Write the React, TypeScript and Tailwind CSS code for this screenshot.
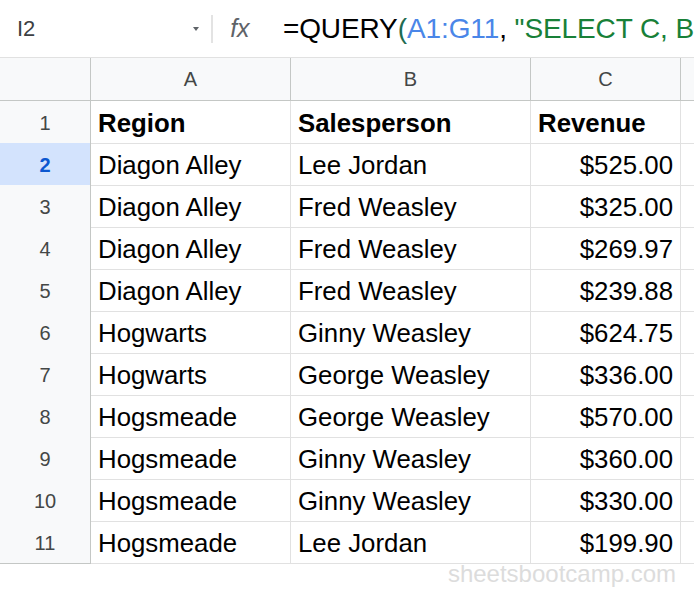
const rows: [string, string, string][] = [
  ['Diagon Alley', 'Lee Jordan', '$525.00'],
  ['Diagon Alley', 'Fred Weasley', '$325.00'],
  ['Diagon Alley', 'Fred Weasley', '$269.97'],
  ['Diagon Alley', 'Fred Weasley', '$239.88'],
  ['Hogwarts', 'Ginny Weasley', '$624.75'],
  ['Hogwarts', 'George Weasley', '$336.00'],
  ['Hogsmeade', 'George Weasley', '$570.00'],
  ['Hogsmeade', 'Ginny Weasley', '$360.00'],
  ['Hogsmeade', 'Ginny Weasley', '$330.00'],
  ['Hogsmeade', 'Lee Jordan', '$199.90'],
];

const gridCols = 'grid grid-cols-[91px_200px_240px_150px_1fr]';

function FormulaBar() {
  return (
    <div className="flex h-[58px] items-center border-b border-[#e1e1e1] bg-white">
      <div className="flex w-[212px] items-center pl-[17px] pr-[12px]">
        <span className="text-[22px] text-[#3c4043]">I2</span>
        <span className="ml-auto mt-[1px] h-0 w-0 border-x-[3.5px] border-t-[4px] border-x-transparent border-t-[#5f6368]" />
      </div>
      <div className="h-[28px] w-[2px] bg-[#e3e3e3]" />
      <span className="ml-[17px] w-[53px] text-[25px] italic text-[#5f6368]">fx</span>
      <div className="whitespace-nowrap text-[28px] tracking-[-0.1px] text-black">
        =QUERY<span className="text-[#1e6b52]">(</span>
        <span className="text-[#4a86e8]">A1:G11</span>, <span className="text-[#188038]">"SELECT C, B</span>
      </div>
    </div>
  );
}

function ColumnHeaders() {
  return (
    <div className={`${gridCols} h-[43px] bg-[#f8f9fa] text-[20px] text-[#444746]`}>
      <div className="border-b border-r border-[#c4c7c5]" />
      {['A', 'B', 'C'].map((c) => (
        <div
          key={c}
          className="flex items-center justify-center border-b border-r border-[#c4c7c5]"
        >
          {c}
        </div>
      ))}
      <div className="border-b border-[#c4c7c5]" />
    </div>
  );
}

function Row({
  num,
  cells,
  bold,
  active,
}: {
  num: number;
  cells: [string, string, string];
  bold?: boolean;
  active?: boolean;
}) {
  return (
    <div className={`${gridCols} h-[42px] text-[25.8px] text-black`}>
      <div
        className={
          active
            ? 'flex items-center justify-center border-b border-r border-[#c4c7c5] bg-[#d3e3fd] pt-[2px] text-[20px] font-bold text-[#0b57d0]'
            : 'flex items-center justify-center border-b border-r border-[#c4c7c5] bg-[#f8f9fa] pt-[2px] text-[20px] text-[#444746]'
        }
      >
        {num}
      </div>
      <div
        className={`flex items-center border-b border-r border-[#e1e1e1] px-[7px] pt-[3px] ${bold ? 'font-bold' : ''}`}
      >
        {cells[0]}
      </div>
      <div
        className={`flex items-center border-b border-r border-[#e1e1e1] px-[7px] pt-[3px] ${bold ? 'font-bold' : ''}`}
      >
        {cells[1]}
      </div>
      <div
        className={`flex items-center border-b border-r border-[#e1e1e1] px-[7px] pt-[3px] ${bold ? 'justify-start font-bold' : 'justify-end'}`}
      >
        {cells[2]}
      </div>
      <div className="border-b border-[#e1e1e1]" />
    </div>
  );
}

export default function App() {
  return (
    <div
      className="relative h-[590px] w-[694px] overflow-hidden bg-white"
      style={{ fontFamily: '"Liberation Sans", Arial, sans-serif' }}
    >
      <FormulaBar />
      <ColumnHeaders />
      <Row num={1} cells={['Region', 'Salesperson', 'Revenue']} bold />
      {rows.map((r, i) => (
        <Row key={i} num={i + 2} cells={r} active={i === 0} />
      ))}
      <div className="absolute right-[18px] top-[556px] text-[24px] text-[#dcdcdc]">
        sheetsbootcamp.com
      </div>
    </div>
  );
}
